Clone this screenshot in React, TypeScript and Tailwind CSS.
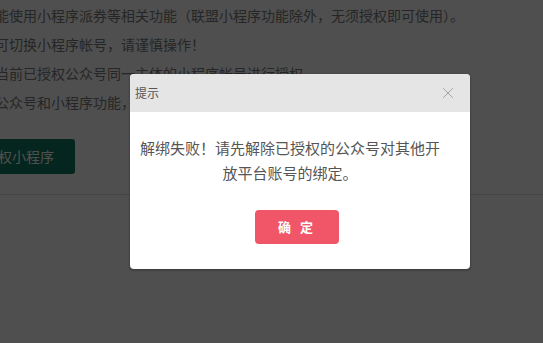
import { X } from "lucide-react";

const LINES = [
  "能使用小程序派券等相关功能（联盟小程序功能除外，无须授权即可使用）。",
  "可切换小程序帐号，请谨慎操作！",
  "当前已授权公众号同一主体的小程序帐号进行授权。",
  "公众号和小程序功能，授权后可使用全部能力。",
];

export default function App() {
  return (
    <div
      className="relative h-[343px] w-[543px] overflow-hidden bg-white"
      style={{ fontFamily: '"Noto Sans CJK SC", "Noto Sans", sans-serif' }}
    >
      {/* page underneath */}
      <div className="ml-[-5px] pt-[1px]">
        {LINES.map((line) => (
          <p key={line} className="whitespace-nowrap text-[14px] leading-[29px] text-[#7a7a7a]">
            {line}
          </p>
        ))}
        <button className="ml-[-31px] mt-[22px] h-[35px] rounded-[3px] bg-[#127a62] pl-5 pr-[21px] text-[14px] text-white">
          授权小程序
        </button>
      </div>
      <div className="mt-[20px] border-b border-[#dddddd]" />

      {/* mask */}
      <div className="absolute inset-0 flex items-center bg-black/[0.69] pl-[130px]">
        <div className="w-[340px] overflow-hidden rounded-[4px] bg-white shadow-[0_1px_3px_rgba(0,0,0,0.35)]">
          <div className="flex h-[38px] items-center justify-between bg-[#e5e5e5] pl-[5px] pr-[13px]">
            <span className="text-[12px] text-[#555]">提示</span>
            <X size={18} strokeWidth={1} className="text-[#8c8c8c]" />
          </div>
          <div className="flex flex-col items-center pb-[25px] pl-[8px] pr-[28px] pt-[23px]">
            <p className="text-center text-[15px] leading-[25px] text-[#555]">
              解绑失败！请先解除已授权的公众号对其他开放平台账号的绑定。
            </p>
            <button className="ml-[14px] mt-[25px] h-[34px] w-[84px] rounded-[4px] bg-[#f05667] text-[13px] font-semibold tracking-[3px] text-white">
              确 定
            </button>
          </div>
        </div>
      </div>
    </div>
  );
}
